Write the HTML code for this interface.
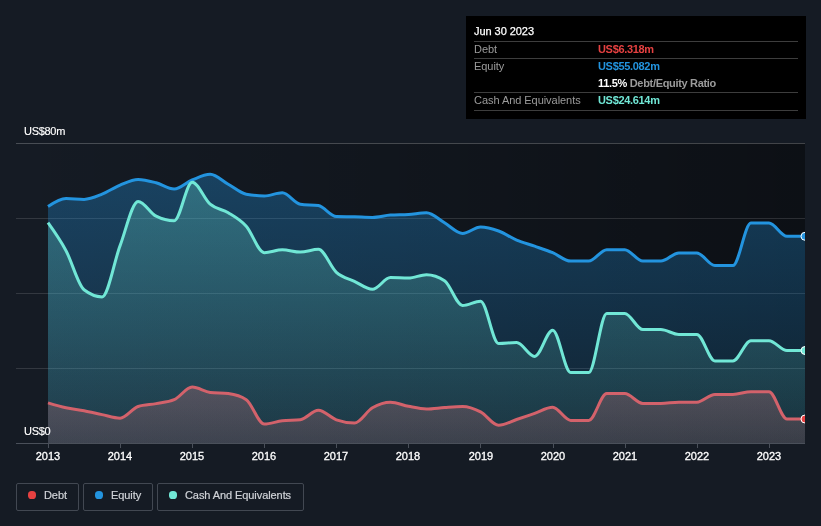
<!DOCTYPE html>
<html lang="en">
<head>
<meta charset="utf-8">
<title>Debt to Equity History</title>
<style>
  html, body { margin: 0; padding: 0; }
  body {
    width: 821px; height: 526px; overflow: hidden; position: relative;
    background: #151b24;
    font-family: "Liberation Sans", sans-serif;
    color: #fff;
  }
  svg.chart { position: absolute; left: 0; top: 0; }
  .t { position: absolute; white-space: nowrap; line-height: 1; will-change: transform; }
  .tooltip span, .legend span { will-change: transform; }
  .ylab { font-size: 11px; color: #fff; font-weight: 400; letter-spacing: -0.3px; -webkit-text-stroke: 0.15px #fff; }
  .xlab { font-size: 11px; -webkit-text-stroke: 0.3px #fff; color: #fff; width: 60px; text-align: center; font-weight: 400; }
  .tooltip {
    position: absolute; left: 466px; top: 16px; width: 340px; height: 103px;
    background: #000;
  }
  .tooltip .row { position: absolute; left: 8px; right: 8px; height: 17px; }
  .tooltip .rule { position: absolute; left: 8px; right: 8px; height: 1px; background: #3d3d3d; }
  .tooltip .k { position: absolute; left: 0; top: 0; font-size: 11px; letter-spacing: -0.05px; line-height: 17px; color: #9b9b9b; }
  .tooltip .v { position: absolute; left: 123.5px; top: 0; font-size: 11px; line-height: 17px; font-weight: 700; letter-spacing: -0.32px; }
  .tooltip .date { font-size: 11px; -webkit-text-stroke: 0.25px #fff; color: #fff; line-height: 17px; }
  .legend { position: absolute; top: 483px; height: 26px; border: 1px solid #424852; border-radius: 2px; box-sizing: content-box; }
  .legend i { position: absolute; left: 11px; top: 7px; width: 8px; height: 8.4px; border-radius: 3.6px; }
  .legend span { position: absolute; left: 27px; top: -1px; line-height: 24px; font-size: 11px; color: #d0d3d8; -webkit-text-stroke: 0.2px #d0d3d8; letter-spacing: -0.08px; white-space: nowrap; }
</style>
</head>
<body>

<svg class="chart" width="821" height="526" viewBox="0 0 821 526">
  <defs>
    <linearGradient id="plotbg" x1="0" y1="0" x2="1" y2="0">
      <stop offset="0" stop-color="#000" stop-opacity="0"/>
      <stop offset="1" stop-color="#000" stop-opacity="0.42"/>
    </linearGradient>
    <linearGradient id="gE" x1="0" y1="143" x2="0" y2="443" gradientUnits="userSpaceOnUse">
      <stop offset="0" stop-color="#2394df" stop-opacity="0.36"/>
      <stop offset="1" stop-color="#2394df" stop-opacity="0.12"/>
    </linearGradient>
    <linearGradient id="gC" x1="0" y1="143" x2="0" y2="443" gradientUnits="userSpaceOnUse">
      <stop offset="0" stop-color="#71e7d6" stop-opacity="0.30"/>
      <stop offset="1" stop-color="#71e7d6" stop-opacity="0.09"/>
    </linearGradient>
    <linearGradient id="gD" x1="0" y1="380" x2="0" y2="443" gradientUnits="userSpaceOnUse">
      <stop offset="0" stop-color="#dc787d" stop-opacity="0.28"/>
      <stop offset="1" stop-color="#dc787d" stop-opacity="0.17"/>
    </linearGradient>
    <clipPath id="plotclip"><rect x="16" y="130" width="789" height="320"/></clipPath>
  </defs>

  <!-- plot background -->
  <rect x="16" y="143" width="789" height="300" fill="url(#plotbg)"/>

  <!-- gridlines -->
  <g stroke="#ffffff" stroke-opacity="0.13" stroke-width="1" shape-rendering="crispEdges">
    <line x1="16" x2="805" y1="143.5" y2="143.5" stroke-opacity="0.22"/>
    <line x1="16" x2="805" y1="218.5" y2="218.5"/>
    <line x1="16" x2="805" y1="293.5" y2="293.5"/>
    <line x1="16" x2="805" y1="368.5" y2="368.5"/>
  </g>

  <g clip-path="url(#plotclip)">
    <path d="M48.00,206.50C54.01,202.50,60.02,198.50,66.02,198.50C72.03,198.50,78.04,199.40,84.05,199.40C90.06,199.40,96.06,196.58,102.07,194.20C108.08,191.82,114.09,187.57,120.10,185.10C126.10,182.63,132.11,179.40,138.12,179.40C144.13,179.40,150.13,181.18,156.14,182.80C162.15,184.42,168.16,189.10,174.17,189.10C180.17,189.10,186.18,182.47,192.19,180.00C198.20,177.53,204.21,174.30,210.21,174.30C216.22,174.30,222.23,180.88,228.24,184.20C234.25,187.52,240.25,193.07,246.26,194.20C252.27,195.33,258.28,195.90,264.29,195.90C270.29,195.90,276.30,192.80,282.31,192.80C288.32,192.80,294.33,203.27,300.33,204.20C306.34,205.13,312.35,204.67,318.36,205.60C324.37,206.53,330.37,216.30,336.38,216.50C342.39,216.70,348.40,216.65,354.40,216.80C360.41,216.95,366.42,217.40,372.43,217.40C378.44,217.40,384.44,215.50,390.45,215.10C396.46,214.70,402.47,214.88,408.48,214.50C414.48,214.12,420.49,212.80,426.50,212.80C432.51,212.80,438.52,219.37,444.52,222.80C450.53,226.23,456.54,233.40,462.55,233.40C468.56,233.40,474.56,227.00,480.57,227.00C486.58,227.00,492.59,228.82,498.60,231.00C504.60,233.18,510.61,237.57,516.62,240.10C522.63,242.63,528.63,244.10,534.64,246.20C540.65,248.30,546.66,250.22,552.67,252.70C558.67,255.18,564.68,261.10,570.69,261.10C576.70,261.10,582.71,261.10,588.71,261.10C594.72,261.10,600.73,249.80,606.74,249.80C612.75,249.80,618.75,249.80,624.76,249.80C630.77,249.80,636.78,261.10,642.79,261.10C648.79,261.10,654.80,261.10,660.81,261.10C666.82,261.10,672.83,253.00,678.83,253.00C684.84,253.00,690.85,253.00,696.86,253.00C702.87,253.00,708.87,265.60,714.88,265.60C720.89,265.60,726.90,265.60,732.90,265.60C738.91,265.60,744.92,223.00,750.93,223.00C756.94,223.00,762.94,223.00,768.95,223.00C774.96,223.00,780.97,236.30,786.98,236.30C792.98,236.30,798.99,236.30,805.00,236.30L805,443L48,443Z" fill="url(#gE)"/>
    <path d="M48.00,222.70C54.01,231.11,60.02,239.52,66.02,250.70C72.03,261.88,78.04,285.07,84.05,289.80C90.06,294.53,96.06,296.90,102.07,296.90C108.08,296.90,114.09,261.52,120.10,245.60C126.10,229.68,132.11,201.40,138.12,201.40C144.13,201.40,150.13,213.13,156.14,216.20C162.15,219.27,168.16,220.80,174.17,220.80C180.17,220.80,186.18,182.20,192.19,182.20C198.20,182.20,204.21,199.10,210.21,204.20C216.22,209.30,222.23,209.13,228.24,212.80C234.25,216.47,240.25,219.55,246.26,226.20C252.27,232.85,258.28,252.70,264.29,252.70C270.29,252.70,276.30,249.80,282.31,249.80C288.32,249.80,294.33,252.10,300.33,252.10C306.34,252.10,312.35,249.30,318.36,249.30C324.37,249.30,330.37,266.97,336.38,272.30C342.39,277.63,348.40,278.47,354.40,281.30C360.41,284.13,366.42,289.30,372.43,289.30C378.44,289.30,384.44,277.60,390.45,277.60C396.46,277.60,402.47,278.10,408.48,278.10C414.48,278.10,420.49,274.70,426.50,274.70C432.51,274.70,438.52,276.70,444.52,280.70C450.53,284.70,456.54,305.40,462.55,305.40C468.56,305.40,474.56,301.20,480.57,301.20C486.58,301.20,492.59,343.50,498.60,343.50C504.60,343.50,510.61,342.50,516.62,342.50C522.63,342.50,528.63,356.40,534.64,356.40C540.65,356.40,546.66,330.20,552.67,330.20C558.67,330.20,564.68,372.60,570.69,372.60C576.70,372.60,582.71,372.60,588.71,372.60C594.72,372.60,600.73,313.40,606.74,313.40C612.75,313.40,618.75,313.40,624.76,313.40C630.77,313.40,636.78,329.60,642.79,329.60C648.79,329.60,654.80,329.60,660.81,329.60C666.82,329.60,672.83,334.40,678.83,334.40C684.84,334.40,690.85,334.40,696.86,334.40C702.87,334.40,708.87,360.90,714.88,360.90C720.89,360.90,726.90,360.90,732.90,360.90C738.91,360.90,744.92,340.70,750.93,340.70C756.94,340.70,762.94,340.70,768.95,340.70C774.96,340.70,780.97,350.50,786.98,350.50C792.98,350.50,798.99,350.50,805.00,350.50L805,443L48,443Z" fill="url(#gC)"/>
    <path d="M48.00,402.90C54.01,404.70,60.02,406.50,66.02,407.80C72.03,409.10,78.04,409.57,84.05,410.70C90.06,411.83,96.06,413.35,102.07,414.60C108.08,415.85,114.09,418.20,120.10,418.20C126.10,418.20,132.11,408.43,138.12,406.50C144.13,404.57,150.13,404.73,156.14,403.60C162.15,402.47,168.16,402.30,174.17,399.70C180.17,397.10,186.18,387.10,192.19,387.10C198.20,387.10,204.21,391.60,210.21,392.40C216.22,393.20,222.23,392.80,228.24,393.60C234.25,394.40,240.25,395.63,246.26,399.70C252.27,403.77,258.28,424.10,264.29,424.10C270.29,424.10,276.30,421.37,282.31,420.70C288.32,420.03,294.33,420.37,300.33,419.70C306.34,419.03,312.35,410.20,318.36,410.20C324.37,410.20,330.37,417.77,336.38,419.90C342.39,422.03,348.40,423.10,354.40,423.10C360.41,423.10,366.42,411.28,372.43,407.80C378.44,404.32,384.44,402.20,390.45,402.20C396.46,402.20,402.47,405.17,408.48,406.30C414.48,407.43,420.49,409.00,426.50,409.00C432.51,409.00,438.52,407.92,444.52,407.50C450.53,407.08,456.54,406.50,462.55,406.50C468.56,406.50,474.56,408.77,480.57,411.90C486.58,415.03,492.59,425.30,498.60,425.30C504.60,425.30,510.61,421.48,516.62,419.50C522.63,417.52,528.63,415.43,534.64,413.40C540.65,411.37,546.66,407.30,552.67,407.30C558.67,407.30,564.68,420.40,570.69,420.40C576.70,420.40,582.71,420.40,588.71,420.40C594.72,420.40,600.73,393.60,606.74,393.60C612.75,393.60,618.75,393.60,624.76,393.60C630.77,393.60,636.78,403.40,642.79,403.40C648.79,403.40,654.80,403.40,660.81,403.40C666.82,403.40,672.83,402.20,678.83,402.20C684.84,402.20,690.85,402.20,696.86,402.20C702.87,402.20,708.87,394.40,714.88,394.40C720.89,394.40,726.90,394.40,732.90,394.40C738.91,394.40,744.92,391.70,750.93,391.70C756.94,391.70,762.94,391.70,768.95,391.70C774.96,391.70,780.97,419.00,786.98,419.00C792.98,419.00,798.99,419.00,805.00,419.00L805,443L48,443Z" fill="url(#gD)"/>
  </g>

  <g clip-path="url(#plotclip)" fill="none" stroke-width="3" stroke-linejoin="round" stroke-linecap="butt">
    <path d="M48.00,206.50C54.01,202.50,60.02,198.50,66.02,198.50C72.03,198.50,78.04,199.40,84.05,199.40C90.06,199.40,96.06,196.58,102.07,194.20C108.08,191.82,114.09,187.57,120.10,185.10C126.10,182.63,132.11,179.40,138.12,179.40C144.13,179.40,150.13,181.18,156.14,182.80C162.15,184.42,168.16,189.10,174.17,189.10C180.17,189.10,186.18,182.47,192.19,180.00C198.20,177.53,204.21,174.30,210.21,174.30C216.22,174.30,222.23,180.88,228.24,184.20C234.25,187.52,240.25,193.07,246.26,194.20C252.27,195.33,258.28,195.90,264.29,195.90C270.29,195.90,276.30,192.80,282.31,192.80C288.32,192.80,294.33,203.27,300.33,204.20C306.34,205.13,312.35,204.67,318.36,205.60C324.37,206.53,330.37,216.30,336.38,216.50C342.39,216.70,348.40,216.65,354.40,216.80C360.41,216.95,366.42,217.40,372.43,217.40C378.44,217.40,384.44,215.50,390.45,215.10C396.46,214.70,402.47,214.88,408.48,214.50C414.48,214.12,420.49,212.80,426.50,212.80C432.51,212.80,438.52,219.37,444.52,222.80C450.53,226.23,456.54,233.40,462.55,233.40C468.56,233.40,474.56,227.00,480.57,227.00C486.58,227.00,492.59,228.82,498.60,231.00C504.60,233.18,510.61,237.57,516.62,240.10C522.63,242.63,528.63,244.10,534.64,246.20C540.65,248.30,546.66,250.22,552.67,252.70C558.67,255.18,564.68,261.10,570.69,261.10C576.70,261.10,582.71,261.10,588.71,261.10C594.72,261.10,600.73,249.80,606.74,249.80C612.75,249.80,618.75,249.80,624.76,249.80C630.77,249.80,636.78,261.10,642.79,261.10C648.79,261.10,654.80,261.10,660.81,261.10C666.82,261.10,672.83,253.00,678.83,253.00C684.84,253.00,690.85,253.00,696.86,253.00C702.87,253.00,708.87,265.60,714.88,265.60C720.89,265.60,726.90,265.60,732.90,265.60C738.91,265.60,744.92,223.00,750.93,223.00C756.94,223.00,762.94,223.00,768.95,223.00C774.96,223.00,780.97,236.30,786.98,236.30C792.98,236.30,798.99,236.30,805.00,236.30" stroke="#2394df"/>
    <path d="M48.00,222.70C54.01,231.11,60.02,239.52,66.02,250.70C72.03,261.88,78.04,285.07,84.05,289.80C90.06,294.53,96.06,296.90,102.07,296.90C108.08,296.90,114.09,261.52,120.10,245.60C126.10,229.68,132.11,201.40,138.12,201.40C144.13,201.40,150.13,213.13,156.14,216.20C162.15,219.27,168.16,220.80,174.17,220.80C180.17,220.80,186.18,182.20,192.19,182.20C198.20,182.20,204.21,199.10,210.21,204.20C216.22,209.30,222.23,209.13,228.24,212.80C234.25,216.47,240.25,219.55,246.26,226.20C252.27,232.85,258.28,252.70,264.29,252.70C270.29,252.70,276.30,249.80,282.31,249.80C288.32,249.80,294.33,252.10,300.33,252.10C306.34,252.10,312.35,249.30,318.36,249.30C324.37,249.30,330.37,266.97,336.38,272.30C342.39,277.63,348.40,278.47,354.40,281.30C360.41,284.13,366.42,289.30,372.43,289.30C378.44,289.30,384.44,277.60,390.45,277.60C396.46,277.60,402.47,278.10,408.48,278.10C414.48,278.10,420.49,274.70,426.50,274.70C432.51,274.70,438.52,276.70,444.52,280.70C450.53,284.70,456.54,305.40,462.55,305.40C468.56,305.40,474.56,301.20,480.57,301.20C486.58,301.20,492.59,343.50,498.60,343.50C504.60,343.50,510.61,342.50,516.62,342.50C522.63,342.50,528.63,356.40,534.64,356.40C540.65,356.40,546.66,330.20,552.67,330.20C558.67,330.20,564.68,372.60,570.69,372.60C576.70,372.60,582.71,372.60,588.71,372.60C594.72,372.60,600.73,313.40,606.74,313.40C612.75,313.40,618.75,313.40,624.76,313.40C630.77,313.40,636.78,329.60,642.79,329.60C648.79,329.60,654.80,329.60,660.81,329.60C666.82,329.60,672.83,334.40,678.83,334.40C684.84,334.40,690.85,334.40,696.86,334.40C702.87,334.40,708.87,360.90,714.88,360.90C720.89,360.90,726.90,360.90,732.90,360.90C738.91,360.90,744.92,340.70,750.93,340.70C756.94,340.70,762.94,340.70,768.95,340.70C774.96,340.70,780.97,350.50,786.98,350.50C792.98,350.50,798.99,350.50,805.00,350.50" stroke="#71e7d6"/>
    <path d="M48.00,402.90C54.01,404.70,60.02,406.50,66.02,407.80C72.03,409.10,78.04,409.57,84.05,410.70C90.06,411.83,96.06,413.35,102.07,414.60C108.08,415.85,114.09,418.20,120.10,418.20C126.10,418.20,132.11,408.43,138.12,406.50C144.13,404.57,150.13,404.73,156.14,403.60C162.15,402.47,168.16,402.30,174.17,399.70C180.17,397.10,186.18,387.10,192.19,387.10C198.20,387.10,204.21,391.60,210.21,392.40C216.22,393.20,222.23,392.80,228.24,393.60C234.25,394.40,240.25,395.63,246.26,399.70C252.27,403.77,258.28,424.10,264.29,424.10C270.29,424.10,276.30,421.37,282.31,420.70C288.32,420.03,294.33,420.37,300.33,419.70C306.34,419.03,312.35,410.20,318.36,410.20C324.37,410.20,330.37,417.77,336.38,419.90C342.39,422.03,348.40,423.10,354.40,423.10C360.41,423.10,366.42,411.28,372.43,407.80C378.44,404.32,384.44,402.20,390.45,402.20C396.46,402.20,402.47,405.17,408.48,406.30C414.48,407.43,420.49,409.00,426.50,409.00C432.51,409.00,438.52,407.92,444.52,407.50C450.53,407.08,456.54,406.50,462.55,406.50C468.56,406.50,474.56,408.77,480.57,411.90C486.58,415.03,492.59,425.30,498.60,425.30C504.60,425.30,510.61,421.48,516.62,419.50C522.63,417.52,528.63,415.43,534.64,413.40C540.65,411.37,546.66,407.30,552.67,407.30C558.67,407.30,564.68,420.40,570.69,420.40C576.70,420.40,582.71,420.40,588.71,420.40C594.72,420.40,600.73,393.60,606.74,393.60C612.75,393.60,618.75,393.60,624.76,393.60C630.77,393.60,636.78,403.40,642.79,403.40C648.79,403.40,654.80,403.40,660.81,403.40C666.82,403.40,672.83,402.20,678.83,402.20C684.84,402.20,690.85,402.20,696.86,402.20C702.87,402.20,708.87,394.40,714.88,394.40C720.89,394.40,726.90,394.40,732.90,394.40C738.91,394.40,744.92,391.70,750.93,391.70C756.94,391.70,762.94,391.70,768.95,391.70C774.96,391.70,780.97,419.00,786.98,419.00C792.98,419.00,798.99,419.00,805.00,419.00" stroke="#d3626b"/>
    <circle cx="805" cy="236.3" r="4" fill="#2394df" stroke="#fff" stroke-width="1"/>
    <circle cx="805" cy="350.5" r="4" fill="#71e7d6" stroke="#fff" stroke-width="1"/>
    <circle cx="805" cy="419.0" r="4" fill="#e64141" stroke="#fff" stroke-width="1"/>
  </g>

  <!-- x axis -->
  <g stroke="#4a505a" stroke-width="1" shape-rendering="crispEdges">
    <line x1="16" x2="805" y1="443.5" y2="443.5"/>
    <line x1="48.5" x2="48.5" y1="443" y2="448"/>
    <line x1="120.5" x2="120.5" y1="443" y2="448"/>
    <line x1="192.5" x2="192.5" y1="443" y2="448"/>
    <line x1="264.5" x2="264.5" y1="443" y2="448"/>
    <line x1="336.5" x2="336.5" y1="443" y2="448"/>
    <line x1="408.5" x2="408.5" y1="443" y2="448"/>
    <line x1="480.5" x2="480.5" y1="443" y2="448"/>
    <line x1="553.5" x2="553.5" y1="443" y2="448"/>
    <line x1="625.5" x2="625.5" y1="443" y2="448"/>
    <line x1="697.5" x2="697.5" y1="443" y2="448"/>
    <line x1="769.5" x2="769.5" y1="443" y2="448"/>
  </g>
</svg>

<div class="t ylab" style="left:24px; top:126px;">US$80m</div>
<div class="t ylab" style="left:24px; top:426px;">US$0</div>

<div class="t xlab" style="left:18px;  top:451px;">2013</div>
<div class="t xlab" style="left:90px;  top:451px;">2014</div>
<div class="t xlab" style="left:162px; top:451px;">2015</div>
<div class="t xlab" style="left:234px; top:451px;">2016</div>
<div class="t xlab" style="left:306px; top:451px;">2017</div>
<div class="t xlab" style="left:378px; top:451px;">2018</div>
<div class="t xlab" style="left:451px; top:451px;">2019</div>
<div class="t xlab" style="left:523px; top:451px;">2020</div>
<div class="t xlab" style="left:595px; top:451px;">2021</div>
<div class="t xlab" style="left:667px; top:451px;">2022</div>
<div class="t xlab" style="left:739px; top:451px;">2023</div>

<div class="tooltip">
  <div class="row" style="top:7px;"><span class="k date">Jun 30 2023</span></div>
  <div class="rule" style="top:25px;"></div>
  <div class="row" style="top:25px;"><span class="k">Debt</span><span class="v" style="color:#e64141;">US$6.318m</span></div>
  <div class="rule" style="top:42px;"></div>
  <div class="row" style="top:42px;"><span class="k">Equity</span><span class="v" style="color:#2394df;">US$55.082m</span></div>
  <div class="row" style="top:59px;"><span class="v" style="color:#fff;">11.5% <span style="color:#9b9b9b;">Debt/Equity Ratio</span></span></div>
  <div class="rule" style="top:76px;"></div>
  <div class="row" style="top:76px;"><span class="k">Cash And Equivalents</span><span class="v" style="color:#71e7d6;">US$24.614m</span></div>
  <div class="rule" style="top:94px;"></div>
</div>

<div class="legend" style="left:16px; width:61px;"><i style="background:#e64141;"></i><span>Debt</span></div>
<div class="legend" style="left:83px; width:68px;"><i style="background:#2394df;"></i><span>Equity</span></div>
<div class="legend" style="left:157px; width:145px;"><i style="background:#71e7d6;"></i><span>Cash And Equivalents</span></div>

</body>
</html>
